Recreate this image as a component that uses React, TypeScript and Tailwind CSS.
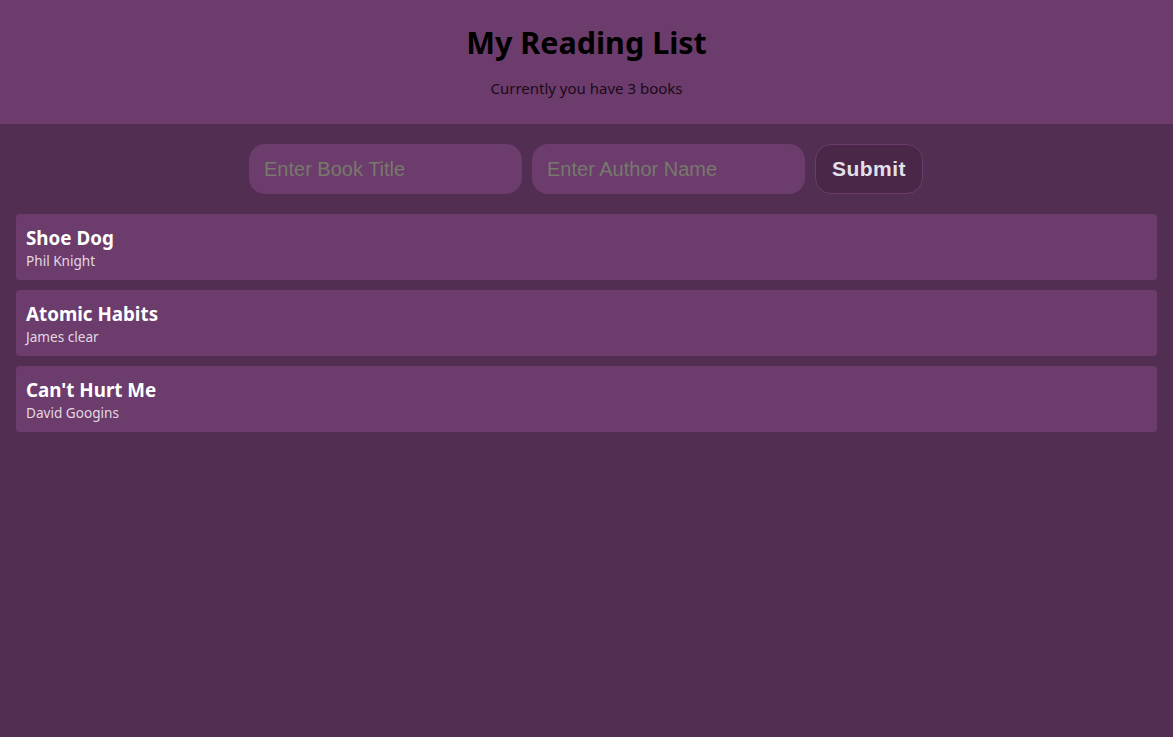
const books = [
  { title: "Shoe Dog", author: "Phil Knight" },
  { title: "Atomic Habits", author: "James clear" },
  { title: "Can't Hurt Me", author: "David Googins" },
];

export default function App() {
  return (
    <div className="min-h-screen bg-[#522e52] font-['Noto_Sans','Open_Sans',sans-serif]">
      <header className="bg-[#6c3c6c] pt-[20px] pb-[26px] text-center">
        <h1 className="text-[30.5px] leading-[44px] font-bold text-black">My Reading List</h1>
        <p className="mt-[14px] text-[15px] leading-[20px] text-[#1a0a1a]">Currently you have {books.length} books</p>
      </header>
      <main className="px-4 pt-5">
        <form className="flex justify-center gap-[10px] pr-px" onSubmit={(e) => e.preventDefault()}>
          <input
            className="w-[273px] h-[50px] rounded-2xl bg-[#6c3c6c] px-[15px] text-[20px] font-['Liberation_Sans',Arial,sans-serif] text-white placeholder:text-[#77796c] outline-none"
            placeholder="Enter Book Title"
          />
          <input
            className="w-[273px] h-[50px] rounded-2xl bg-[#6c3c6c] px-[15px] text-[20px] font-['Liberation_Sans',Arial,sans-serif] text-white placeholder:text-[#77796c] outline-none"
            placeholder="Enter Author Name"
          />
          <button
            type="submit"
            className="w-[108px] h-[50px] rounded-2xl bg-[#4a2648] border border-[#6c3c6c] text-[21px] tracking-[0.5px] font-bold font-['Liberation_Sans',Arial,sans-serif] text-[#e4e0ea]"
          >
            Submit
          </button>
        </form>
        <ul className="mt-5 flex flex-col gap-[10px]">
          {books.map((b) => (
            <li key={b.title} className="rounded bg-[#6c3c6c] px-[10px] pt-[12px] pb-[10px]">
              <h2 className="text-[18.8px] leading-[24px] font-bold text-white">{b.title}</h2>
              <p className="mt-[2px] text-[13.6px] leading-[18px] text-[#e2d8e2]">{b.author}</p>
            </li>
          ))}
        </ul>
      </main>
    </div>
  );
}
